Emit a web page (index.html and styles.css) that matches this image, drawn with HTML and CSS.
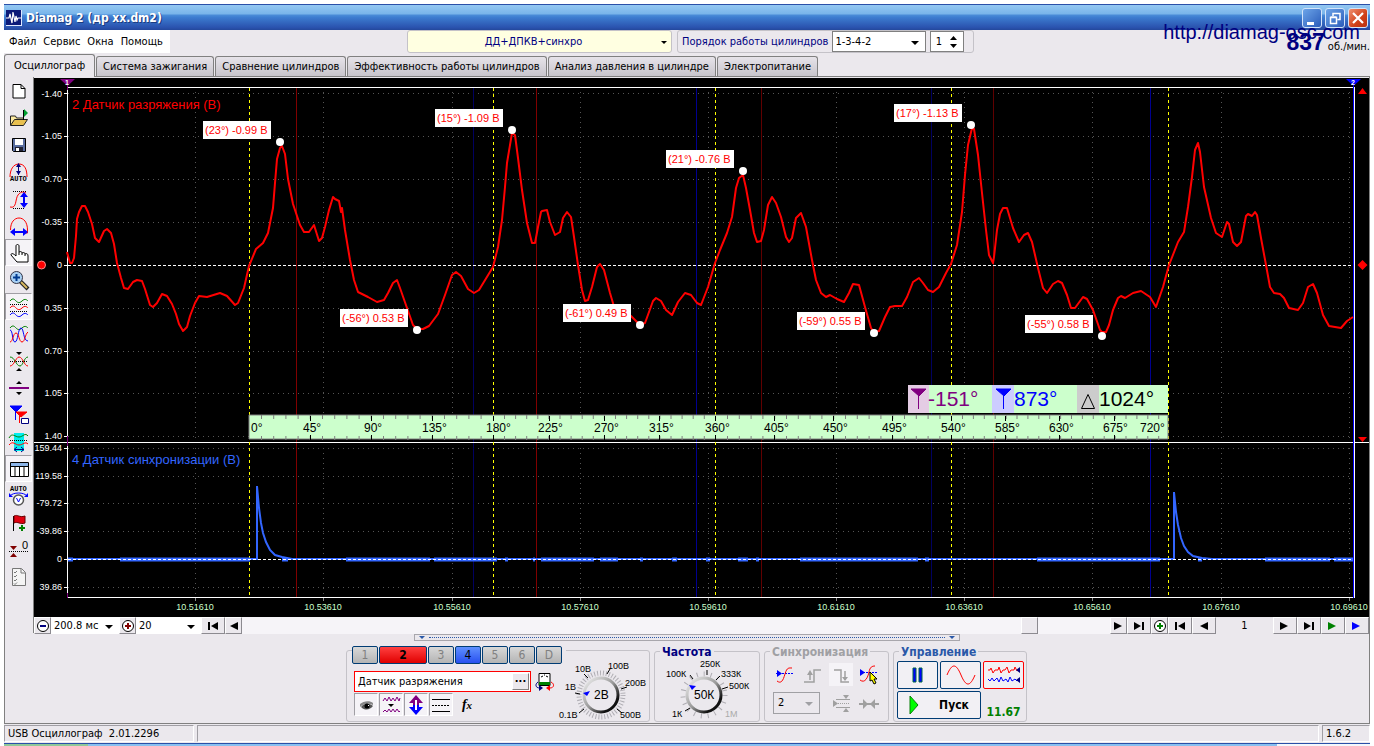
FILE: index.html
```html
<!DOCTYPE html>
<html lang="ru">
<head>
<meta charset="utf-8">
<title>Diamag 2 (др xx.dm2)</title>
<link rel="stylesheet" href="styles.css">
</head>
<body>
<svg class="defs" aria-hidden="true">
  <symbol id="i-next" viewBox="0 0 12 10"><path d="M1 1v8l8-4z"/></symbol>
  <symbol id="i-prev" viewBox="0 0 12 10"><path d="M10 1v8L2 5z"/></symbol>
  <symbol id="i-last" viewBox="0 0 12 10"><path d="M1 1v8l7-4zM9 1h2v8H9z"/></symbol>
  <symbol id="i-first" viewBox="0 0 12 10"><path d="M11 1v8L4 5zM1 1h2v8H1z"/></symbol>
</svg>
<div class="window">
  <header class="titlebar">
    <svg class="logo" width="16" height="16" viewBox="0 0 16 16"><rect width="16" height="16" fill="#0b1a78"/><path d="M0 15.500H16M15.500 0V16" stroke="#dfe8ff"/><path d="M0 8h3l1-4 2 9 1-11 2 10 1-6 1 4 1-2h3" fill="none" stroke="#fff" stroke-width="1.200"/></svg>
    <h1 class="title">Diamag 2 (др xx.dm2)</h1>
    <button class="win-btn" type="button" aria-label="Свернуть"><svg width="18" height="18"><path d="M4 13h7v3H4z" fill="#fff"/></svg></button>
    <button class="win-btn" type="button" aria-label="Восстановить"><svg width="18" height="18"><path d="M7 7V4.500h7v6h-2.500M4.500 8.500h6v6h-6zM4.500 8h6M7 4.500h7" fill="none" stroke="#fff" stroke-width="1.500"/></svg></button>
    <button class="win-btn win-close" type="button" aria-label="Закрыть"><svg width="18" height="18"><path d="M4 4l10 10M14 4L4 14" stroke="#fff" stroke-width="2.200"/></svg></button>
  </header>

  <div class="menu-row">
    <nav class="menu">
      <button type="button">Файл</button><button type="button">Сервис</button><button type="button">Окна</button><button type="button">Помощь</button>
    </nav>
    <span class="drop preset"><select aria-label="Режим"><option>ДД+ДПКВ+синхро</option></select></span>
    <div class="order">
      <label for="order">Порядок работы цилиндров</label>
      <span class="drop order-sel"><select id="order"><option>1-3-4-2</option></select></span>
      <span class="spin"><input type="text" value="1" aria-label="Цилиндр"><svg width="9" height="14" viewBox="0 0 9 14"><path d="M1 5h7L4.500 1zM1 9h7l-3.500 4z"/></svg></span>
    </div>
    <div class="rpm"><b>837</b><span>об./мин.</span></div>
    <a class="site" href="#">http://diamag-osc.com</a>
  </div>

  <div class="tabs" role="tablist">
    <button class="tab active" role="tab" type="button">Осциллограф</button>
    <button class="tab" role="tab" type="button">Система зажигания</button>
    <button class="tab" role="tab" type="button">Сравнение цилиндров</button>
    <button class="tab" role="tab" type="button">Эффективность работы цилиндров</button>
    <button class="tab" role="tab" type="button">Анализ давления в цилиндре</button>
    <button class="tab" role="tab" type="button">Электропитание</button>
  </div>

  <main class="main">
    <div class="upper">
      <div class="tools">
        <button type="button" aria-label="Новый"><svg viewBox="0 0 20 20"><path d="M4 3.500h8l4 4V17H4z" fill="#fff" stroke="#000"/><path d="M12 3.500v4h4" fill="none" stroke="#000"/></svg></button>
        <button type="button" aria-label="Открыть"><svg viewBox="0 0 20 20"><path d="M1.500 17V8h5l1 2h7v2" fill="#fbe9a0" stroke="#222"/><path d="M1.500 17.500l4-6h13l-4 6z" fill="#e8c050" stroke="#222"/><path d="M14.500 12V2" stroke="#000"/><path d="M15 1l4 4-4 4z" fill="#00a030"/></svg></button>
        <button type="button" aria-label="Сохранить"><svg viewBox="0 0 20 20"><path d="M3.500 3.500h13v13h-12l-1-1z" fill="#5a6ea0" stroke="#000"/><path d="M6 4h8v6H6z" fill="#fff"/><path d="M6 12h8v4H6z" fill="#223"/><path d="M7 13h3v3H7z" fill="#fff"/></svg></button>
        <button type="button" aria-label="Авто амплитуда"><svg viewBox="0 0 20 20"><path d="M1 15c0-7 3-13 9-13s8 6 8 13" fill="none" stroke="red"/><path d="M9.500 4v9" stroke="#000080"/><path d="M7 5l2.500-4L12 5zM7 9l2.500 4 2.500-4z" fill="#000080"/><text class="tiny" x="1" y="19">AUTO</text></svg></button>
        <button type="button" aria-label="Амплитуда"><svg viewBox="0 0 20 20"><path d="M4 2.500h14M4 19.500h12" stroke="#000" stroke-dasharray="1 1"/><path d="M1 18c7 2 5-8 8-12s6-3 8-2" fill="none" stroke="red"/><path d="M15 7v9" stroke="#00f" stroke-width="2"/><path d="M11 8l4-5 4 5zM11 14l4 5 4-5z" fill="#00f"/></svg></button>
        <button type="button" aria-label="Ширина"><svg viewBox="0 0 20 20"><path d="M1.500 14c0-8 4-12 8.500-12s8.500 4 8.500 12v3h-2" fill="none" stroke="red"/><path d="M4 16h12" stroke="#00f" stroke-width="2"/><path d="M6 12l-5 4 5 4zM14 12l5 4-5 4z" fill="#00f"/></svg></button>
        <button type="button" class="pressed" aria-label="Рука"><svg viewBox="0 0 20 20"><path d="M8 19l-6-7c0-2 2-2 5 1V3c0-2 3-2 3 0v6c2-1 3 0 3 1 2-1 3 0 3 1 2-1 3 0 3 2v6z" fill="#fff" stroke="#000"/><path d="M10 9v3M13 10v2M16 11v2" stroke="#000"/></svg></button>
        <button type="button" aria-label="Лупа"><svg viewBox="0 0 20 20"><path d="M11 11l8 8" stroke="#222" stroke-width="4"/><path d="M12 12l6 6" stroke="#d8b860" stroke-width="2"/><circle cx="7.500" cy="7.500" r="6" fill="#a8d0f4" stroke="#334"/><path d="M7.500 4v7M4 7.500h7" stroke="#003a90" stroke-width="2"/></svg></button>
        <button type="button" class="pressed" aria-label="Раздельно"><svg viewBox="0 0 20 20"><g fill="none"><path d="M1 4c3-4 5-1 6 0s3 3 6 0 5-1 6 0" stroke="green"/><path d="M1 11c3-4 5-1 6 0s3 3 6 0 5-1 6 0" stroke="red"/><path d="M1 18c3-4 5-1 6 0s3 3 6 0 5-1 6 0" stroke="#00f"/><path d="M1 7.500h18M1 14.500h18" stroke="#000" stroke-dasharray="1 1"/></g></svg></button>
        <button type="button" aria-label="Совместно"><svg viewBox="0 0 20 20"><g fill="none"><path d="M1 4c3-4 5-1 6 0s3 3 6 0 5-1 6 0" stroke="green"/><path d="M1 6c3 0 2 12 5 12S9 4 12 4s2 13 7 13" stroke="#00f"/><path d="M1 18C4 18 4 9 7 9s3 9 6 9 3-8 6-10" stroke="red"/></g></svg></button>
        <button type="button" aria-label="Центр"><svg viewBox="0 0 20 20"><path d="M1 10.500h18" stroke="#000" stroke-dasharray="1 1"/><path d="M1 6c5 0 6 9 10 9 3 0 4-9 8-9" fill="none" stroke="green"/><path d="M1 15c4 0 6-9 9-9 4 0 5 9 9 9" fill="none" stroke="red"/><path d="M7 1h6l-3 3zM7 20h6l-3-3z"/></svg></button>
        <button type="button" aria-label="Линия"><svg viewBox="0 0 20 20"><path d="M0 10h20" stroke="purple" stroke-width="2"/><path d="M7 6h6l-3-3zM7 14h6l-3 3z"/></svg></button>
        <button type="button" aria-label="Маркеры"><svg viewBox="0 0 20 20"><path d="M1 1h12L7 7zM6.500 6v9" fill="#00f" stroke="#00f"/><path d="M7 7h11l-6 5zM10.500 9v9" fill="red" stroke="red"/><path d="M12.500 13.500h7v5h-7z" fill="#fff" stroke="#000080"/></svg></button>
        <button type="button" aria-label="Интервал"><svg viewBox="0 0 20 20"><path d="M5 1h10v18H5z" fill="#0ee"/><path d="M0 6c3-6 6-1 10-1s6-5 9-1" fill="none" stroke="green"/><path d="M0 13c4-5 6 0 10 0s6-4 9-1" fill="none" stroke="red"/><path d="M1 8.500h18" stroke="#000" stroke-dasharray="1 1"/><path d="M6 17.500h9M8 15l-3 2.500L8 20M12 15l3 2.500-3 2.500" fill="none" stroke="#000080"/></svg></button>
        <button type="button" class="pressed" aria-label="Таблица"><svg viewBox="0 0 20 20"><path d="M1.500 3.500h18v14h-18z" fill="#fff" stroke="#000"/><path d="M2 4h17v3H2z" fill="#8ab4e8"/><path d="M2 7.500h17M6 7v10M10.500 7v10M15 7v10" stroke="#000"/></svg></button>
        <button type="button" aria-label="Авто развертка"><svg viewBox="0 0 20 20"><text class="tiny" x="1" y="5">AUTO</text><path d="M1 10c3-4 14-4 17 0" fill="none" stroke="#00f"/><path d="M0 7v4h4zM19 7v4h-4z" fill="#00f"/><circle cx="9.500" cy="14" r="5" fill="#fff" stroke="#555" stroke-width="1.500"/><path d="M7.500 12l2 4 2-4" fill="none" stroke="#00f"/></svg></button>
        <button type="button" aria-label="Флаг"><svg viewBox="0 0 20 20"><path d="M4.500 3v15" stroke="#000"/><path d="M5 3c4-2 5 2 11 0v7c-5 2-7-2-11 0z" fill="#e00010" stroke="#600"/><path d="M13 12v6M10 15h6" stroke="green" stroke-width="2"/></svg></button>
        <button type="button" aria-label="Ноль"><svg viewBox="0 0 20 20"><path d="M1 6h7l-3.500 4zM1 17h7l-3.500-4z" fill="#800000"/><path d="M0 11.500h20" stroke="#000" stroke-dasharray="1 1"/><text class="zero" x="13" y="9">0</text></svg></button>
        <button type="button" aria-label="Отчет"><svg viewBox="0 0 20 20"><path d="M3.500 1.500h9l4 4v13h-13z" fill="#f4f4f4" stroke="#777"/><path d="M5 5l1 1 2-2M5 9l1 1 2-2M5 13l1 1 2-2M5 16.500l1 1 2-2M12 2v4h4" fill="none" stroke="#777"/></svg></button>
      </div>

      <div class="scope-col">
        <svg class="scope" viewBox="34 78 1335 539" role="img" aria-label="Осциллограмма">
          <rect x="34" y="78" width="1335" height="539" fill="#000"/>
          <path class="grid" d="M68 93.500H1353M68 136.500H1353M68 179.500H1353M68 222.500H1353M68 308.500H1353M68 351.500H1353M68 393.500H1353M68 436.500H1353M68 448.500H1353M68 476.500H1353M68 503.500H1353M68 531.500H1353M68 587.500H1353"/>
          <path class="grid" d="M195.500 92V440M323.500 92V440M452.500 92V440M580.500 92V440M708.500 92V440M836.500 92V440M964.500 92V440M1092.500 92V440M1221.500 92V440M1349.500 92V440M195.500 448V596M323.500 448V596M452.500 448V596M580.500 448V596M708.500 448V596M836.500 448V596M964.500 448V596M1092.500 448V596M1221.500 448V596M1349.500 448V596"/>
          <path d="M296.500 88V597M536.500 88V597" stroke="#800000" stroke-width="1"/>
          <path d="M761.500 88V597M993.500 88V597" stroke="#600000"/>
          <path d="M696.500 88V597M1150.500 88V597" stroke="#000090"/>
          <path d="M473.500 88V597M931.500 88V597" stroke="#000060"/>
          <g class="axis"><path d="M67.500 87V598M34 442.500H1369M67 87.500H1354M67 597.500H1354"/><path d="M64 93.500h4M64 136.500h4M64 179.500h4M64 222.500h4M64 265.500h4M64 308.500h4M64 351.500h4M64 393.500h4M64 436.500h4M64 448.500h4M64 476.500h4M64 503.500h4M64 531.500h4M64 559.500h4M64 587.500h4"/><path d="M1354.500 87V598"/></g>
          <path d="M1353.500 84V598" stroke="#00f"/>
          <path d="M67.500 84v6M67.500 436v10M67.500 593v5" stroke="purple"/>
          <path d="M195.500 598v3M323.500 598v3M452.500 598v3M580.500 598v3M708.500 598v3M836.500 598v3M964.500 598v3M1092.500 598v3M1221.500 598v3M1349.500 598v3" stroke="#888"/>
          <path d="M249.500 88V597M493.500 88V597M715.500 88V597M951.500 88V597M1168.500 88V597" stroke="#ff0" stroke-dasharray="3 3"/>
          <path class="sync" d="M68 559H257V486L259 508L261 523L263 533L266 542L270 550L275 555L282 557L292 559H1174V492L1176 512L1178 525L1181 538L1184 546L1188 552L1193 556L1202 558L1212 559H1353"/>
          <path class="noise" d="M68 559.500h5M120 559.500H250M282 559.500h6M346 559.500H430M434 559.500H497M505 559.500h3M533 559.500h2M541 559.500H594M600 559.500H618M640 559.500h3M672 559.500h5M706 559.500h4M738 559.500h10M756 559.500h3M800 559.500H918M925 559.500h4M1037 559.500H1160M1198 559.500h4M1265 559.500H1330M1334 559.500H1353"/>
          <path d="M68 265.500H1353M68 559.500H1353" stroke="#fff" stroke-dasharray="3 2"/>
          <polyline class="vac" points="67,252 70,263 72,263 74,258 76,236 77,219 79,212 82,206 85,206 88,212 92,224 95,238 99,242 104,231 107,229 111,233 114,244 117,263 121,278 124,288 128,289 133,282 137,280 142,281 145,289 150,305 153,307 157,303 162,294 167,296 172,304 176,314 179,324 183,331 187,327 190,316 195,303 199,296 207,297 220,293 227,296 235,305 238,303 244,288 249,266 256,249 263,243 268,233 273,208 275,183 277,159 280,148 282,146 285,154 288,179 293,204 297,216 300,225 304,232 309,232 314,225 319,241 322,238 325,227 329,210 333,197 335,199 339,201 341,212 342,208 345,230 350,260 354,280 358,292 368,297 377,302 384,300 388,293 393,283 397,280 400,288 407,308 413,325 417,329 423,329 429,326 438,314 445,295 452,275 456,272 461,276 468,289 474,293 479,290 493,267 498,247 502,220 505,187 507,163 512,133 515,135 518,158 522,190 527,223 532,243 535,243 538,227 541,212 542,211 547,210 550,222 555,235 560,232 563,218 567,212 571,217 574,237 578,265 582,290 585,301 588,300 592,287 597,267 600,264 604,270 610,293 615,310 631,316 635,320 640,325 645,323 653,301 656,298 661,301 666,310 672,315 678,302 685,293 691,295 697,303 701,305 708,287 715,263 720,250 727,233 732,217 736,188 739,178 743,175 746,188 750,210 754,233 757,242 761,241 764,230 768,205 772,197 776,203 781,217 786,237 789,242 792,238 796,218 801,213 806,227 812,260 816,280 821,293 826,297 830,295 837,299 844,302 849,293 853,284 859,285 865,307 871,328 874,332 879,331 885,317 890,307 895,306 902,306 907,297 913,282 919,278 923,283 928,290 933,292 939,287 946,273 951,264 957,245 962,212 965,175 968,145 972,128 974,129 978,155 982,193 986,230 989,255 993,263 994,257 997,230 1000,214 1003,208 1007,208 1013,228 1019,242 1024,235 1028,233 1032,242 1038,268 1043,288 1047,293 1053,284 1058,281 1062,283 1067,295 1071,308 1075,308 1083,297 1087,299 1093,310 1100,330 1102,332 1106,332 1109,325 1113,310 1118,298 1121,296 1125,298 1133,293 1141,291 1150,297 1156,307 1163,287 1169,265 1178,242 1184,232 1188,207 1192,177 1195,150 1198,143 1200,152 1204,187 1211,218 1216,233 1222,237 1227,222 1229,224 1233,242 1237,246 1241,242 1246,216 1248,214 1252,216 1255,212 1257,215 1261,238 1266,265 1270,287 1274,293 1280,294 1284,298 1289,308 1298,310 1303,303 1308,287 1313,284 1317,293 1323,315 1329,326 1341,328 1347,321 1353,317"/>

          <g class="yl">
            <text x="62" y="97">-1.40</text><text x="62" y="139">-1.05</text><text x="62" y="182">-0.70</text><text x="62" y="225">-0.35</text><text x="62" y="268">0</text><text x="62" y="311">0.35</text><text x="62" y="354">0.70</text><text x="62" y="396">1.05</text><text x="62" y="439">1.40</text>
            <text x="62" y="451">159.44</text><text x="62" y="479">119.58</text><text x="62" y="506">-79.72</text><text x="62" y="534">-39.86</text><text x="62" y="562">0</text><text x="62" y="590">39.86</text>
          </g>
          <g class="xl">
            <text x="195" y="610">10.51610</text><text x="323" y="610">10.53610</text><text x="452" y="610">10.55610</text><text x="580" y="610">10.57610</text><text x="708" y="610">10.59610</text><text x="836" y="610">10.61610</text><text x="964" y="610">10.63610</text><text x="1092" y="610">10.65610</text><text x="1221" y="610">10.67610</text><text x="1349" y="610">10.69610</text>
          </g>
          <text class="name" x="72" y="109" fill="red">2 Датчик разряжения (В)</text>
          <text class="name" x="72" y="464" fill="#36f">4 Датчик синхронизации (В)</text>

          <path d="M60 79h15l-7.500 7z" fill="purple"/><text class="flag" x="65" y="85">1</text>
          <path d="M1346 79h15l-7.500 7z" fill="#00f"/><text class="flag" x="1351" y="85">2</text>
          <circle cx="41.500" cy="265" r="4" fill="red" stroke="#f88"/>
          <path d="M1358 94h9l-4.500-6zM1358 437h9l-4.500 5zM1357.500 265l5-5 5 5-5 5z" fill="red"/>

          <g fill="#fff"><path d="M203 121h68v18h-68zM435 109h68v18h-68zM666 150h68v18h-68zM894 104h68v18h-68zM340 309h68v18h-68zM563 304h68v18h-68zM797 312h68v18h-68zM1025 315h68v18h-68z"/>
          <circle cx="280" cy="142" r="4"/><circle cx="512" cy="130" r="4"/><circle cx="743" cy="171" r="4"/><circle cx="971" cy="125" r="4"/><circle cx="417" cy="330" r="4"/><circle cx="640" cy="325" r="4"/><circle cx="874" cy="333" r="4"/><circle cx="1102" cy="336" r="4"/></g>
          <g class="peak">
            <text x="205" y="134">(23°) -0.99 В</text><text x="437" y="122">(15°) -1.09 В</text><text x="668" y="163">(21°) -0.76 В</text><text x="896" y="117">(17°) -1.13 В</text><text x="342" y="322">(-56°) 0.53 В</text><text x="565" y="317">(-61°) 0.49 В</text><text x="799" y="325">(-59°) 0.55 В</text><text x="1027" y="328">(-55°) 0.58 В</text>
          </g>

          <path d="M908 385h260v28H908z" fill="#cfc"/>
          <path d="M908 385h21v28h-21z" fill="#e4cce4"/><path d="M992 385h22v28h-22z" fill="#ccf"/><path d="M1077 385h22v28h-22z" fill="#ccc"/>
          <path d="M911 389h15l-7 7zM918.500 394v15" fill="purple" stroke="purple"/>
          <path d="M996 389h15l-7 7zM1003.500 394v15" fill="#00f" stroke="#00f"/>
          <path d="M1081.500 408.500h13l-6.500-14z" fill="none" stroke="#000"/>
          <g class="big"><text x="928" y="406" fill="purple">-151°</text><text x="1014" y="406" fill="#00f">873°</text><text x="1099" y="406">1024°</text></g>

          <path d="M249 415h919v24H249z" fill="#cfc" stroke="gray"/>
          <g stroke="gray" stroke-width="4">
            <path d="M261 417H488M261 438H488" stroke-dasharray="1 11.200"/><path d="M504 417H711M504 438H711" stroke-dasharray="1 10.100"/><path d="M727 417H947M727 438H947" stroke-dasharray="1 10.800"/><path d="M962 417H1164M962 438H1164" stroke-dasharray="1 9.900"/>
          </g>
          <path d="M310.500 416v5M371.500 416v5M432.500 416v5M493.500 416v5M549.500 416v5M604.500 416v5M659.500 416v5M715.500 416v5M774.500 416v5M833.500 416v5M892.500 416v5M951.500 416v5M1005.500 416v5M1059.500 416v5M1114.500 416v5M310.500 435v5M371.500 435v5M432.500 435v5M493.500 435v5M549.500 435v5M604.500 435v5M659.500 435v5M715.500 435v5M774.500 435v5M833.500 435v5M892.500 435v5M951.500 435v5M1005.500 435v5M1059.500 435v5M1114.500 435v5" stroke="#000"/>
          <g class="deg">
            <text x="251" y="432">0°</text><text x="303" y="432">45°</text><text x="364" y="432">90°</text><text x="422" y="432">135°</text><text x="486" y="432">180°</text><text x="538" y="432">225°</text><text x="594" y="432">270°</text><text x="649" y="432">315°</text><text x="705" y="432">360°</text><text x="764" y="432">405°</text><text x="823" y="432">450°</text><text x="882" y="432">495°</text><text x="941" y="432">540°</text><text x="995" y="432">585°</text><text x="1049" y="432">630°</text><text x="1103" y="432">675°</text><text x="1140" y="432">720°</text>
          </g>
        </svg>

        <div class="transport">
          <button class="sq" type="button" aria-label="Уменьшить"><svg width="14" height="14"><circle cx="7" cy="7" r="5.500" fill="#fff" stroke="#000"/><path d="M4 7h6" stroke="#000080" stroke-width="2"/></svg></button>
          <span class="drop t-time"><select aria-label="Развертка"><option>200.8 мс</option></select></span>
          <button class="sq" type="button" aria-label="Увеличить"><svg width="14" height="14"><circle cx="7" cy="7" r="5.500" fill="#fff" stroke="#000"/><path d="M4 7h6M7 4v6" stroke="#800000" stroke-width="2"/></svg></button>
          <span class="drop t-zoom"><select aria-label="Масштаб"><option>20</option></select></span>
          <button class="wide" type="button" aria-label="В начало"><svg class="nav"><use href="#i-first"/></svg></button>
          <button class="sq" type="button" aria-label="Назад"><svg class="nav"><use href="#i-prev"/></svg></button>
          <div class="track"><span class="thumb"></span></div>
          <button class="sq" type="button" aria-label="Вперед"><svg class="nav"><use href="#i-next"/></svg></button>
          <button class="wide" type="button" aria-label="В конец"><svg class="nav"><use href="#i-last"/></svg></button>
          <button class="sq" type="button" aria-label="Добавить"><svg width="14" height="14"><circle cx="7" cy="7" r="5.500" fill="#fff" stroke="#000"/><path d="M4 7h6M7 4v6" stroke="green" stroke-width="2"/></svg></button>
          <button class="wide" type="button" aria-label="Первый кадр"><svg class="nav"><use href="#i-first"/></svg></button>
          <button class="wide" type="button" aria-label="Предыдущий кадр"><svg class="nav"><use href="#i-prev"/></svg></button>
          <span class="frame">1</span>
          <button class="wide" type="button" aria-label="Следующий кадр"><svg class="nav"><use href="#i-next"/></svg></button>
          <button class="wide" type="button" aria-label="Последний кадр"><svg class="nav"><use href="#i-last"/></svg></button>
          <button class="wide green" type="button" aria-label="Воспроизвести"><svg class="nav"><use href="#i-next"/></svg></button>
          <button class="wide blue" type="button" aria-label="Просмотр"><svg class="nav"><use href="#i-next"/></svg></button>
        </div>
      </div>
    </div>

    <div class="lower">
      <div class="splitter"><i></i><span></span><i></i></div>
      <div class="panels">
        <section class="panel channels">
          <div class="ch-left">
            <div class="ch-tabs">
              <button type="button">1</button><button class="red" type="button">2</button><button type="button">3</button><button class="blue" type="button">4</button><button type="button">5</button><button type="button">6</button><button type="button">D</button>
            </div>
            <div class="sensor">
              <div class="sensor-box"><input type="text" value="Датчик разряжения" aria-label="Датчик"><button type="button">...</button></div>
              <button class="flat" type="button" aria-label="Прибор"><svg width="20" height="20" viewBox="0 0 20 20"><path d="M4 1.500h11v12H4z" fill="#fff" stroke="#000"/><path d="M4 10h11v3H4z" fill="#008000"/><path d="M6 5l2-1M9 3h1M11 4l2 1" stroke="#000"/><path d="M3 10c-3 2-3 6 2 6" fill="none" stroke="#000080"/><path d="M4 13l4 3-4 3z" fill="#000080"/><path d="M16 10c4 2 3 6-1 6" fill="none" stroke="red"/><path d="M15 13l-4 3 4 3z" fill="red"/></svg></button>
            </div>
            <div class="opts">
              <button class="pressed" type="button" aria-label="Показать"><svg viewBox="0 0 20 20"><path d="M4 9c3-3 10-4 13-1v2C13 8 8 8 4 12z" fill="#888"/><path d="M5 12c3-4 8-4 12-1-3 4-8 5-12 1z" fill="#555"/><circle cx="11" cy="11" r="2.500"/><path d="M12 10h1v1h-1z" fill="#fff"/></svg></button>
              <button class="pressed" type="button" aria-label="Фильтр"><svg viewBox="0 0 20 20"><path d="M2 6l2-3 2 3 2-4 2 4 2-3 2 3 2-4 2 4 1-3M2 17l2-2 2 2 2-3 2 3 2-3 2 3 2-3 2 3 1-1" fill="none" stroke="purple"/><path d="M7 9h6l-3 3z"/></svg></button>
              <button class="pressed" type="button" aria-label="Инверсия"><svg viewBox="0 0 20 20"><path d="M10 0l7 8h-4v3H7V8H3z" fill="purple"/><path d="M10 20l-7-8h4v-2h6v2h4z" fill="#00f"/><path d="M9 5h2v10H9z" fill="#fff"/></svg></button>
              <button class="pressed" type="button" aria-label="Линии"><svg viewBox="0 0 20 20"><path d="M1 4.500h18M1 16.500h18" stroke="#000"/><path d="M1 10.500h18" stroke="#000" stroke-dasharray="2 1"/></svg></button>
              <button class="fx" type="button">f<sub>x</sub></button>
            </div>
          </div>
          <svg class="knob" width="94" height="68" viewBox="556 653 94 68">
            <circle class="ring" cx="601" cy="694" r="22"/>
            <path d="M580 693l-5-1M588 677l-4-4M607 673l3-5M621 688l6-2M584 708l-5 4M617 708l5 4" stroke="#000"/>
            <circle cx="601" cy="694" r="17" fill="#ebe8ed" stroke="url(#kg)" stroke-width="3"/>
            <path d="M583 692l7-2-3 5z" fill="#00f"/>
            <g class="kl"><text x="594" y="698" class="kv">2В</text><text x="575" y="671">10В</text><text x="608" y="668">100В</text><text x="565" y="689">1В</text><text x="625" y="685">200В</text><text x="559" y="717">0.1В</text><text x="620" y="717">500В</text></g>
            <defs><linearGradient id="kg" x1="0" y1="0" x2="1" y2="1"><stop offset="0" stop-color="#f4f4f4"/><stop offset=".5" stop-color="#999"/><stop offset=".8" stop-color="#111"/></linearGradient></defs>
          </svg>
        </section>

        <fieldset class="panel freq">
          <legend>Частота</legend>
          <svg class="knob" width="96" height="66" viewBox="659 655 96 66">
            <circle class="ring sparse" cx="704" cy="694" r="21"/>
            <path d="M693 678l-3-4M707 674v-5M716 679l4-4M722 688l6-2M690 707l-5 3" stroke="#000"/>
            <circle cx="704" cy="694" r="17" fill="#ebe8ed" stroke="url(#kg)" stroke-width="3"/>
            <path d="M689 684l7 1-4 4z" fill="#00f"/>
            <g class="kl"><text x="694" y="698" class="kv">50К</text><text x="700" y="666">250К</text><text x="666" y="676">100К</text><text x="721" y="676">333К</text><text x="729" y="688">500К</text><text x="672" y="716">1К</text><text x="725" y="716" fill="#aaa">1М</text></g>
          </svg>
        </fieldset>

        <fieldset class="panel sync-panel">
          <legend>Синхронизация</legend>
          <div class="sync-grid">
            <button type="button" aria-label="Уровень"><svg viewBox="0 0 20 20"><path d="M1 8.500h17" stroke="#00f" stroke-dasharray="2 1"/><path d="M2 16c4 3 6 0 8-7s4-6 7-6" fill="none" stroke="red"/><path d="M2 5v7l5-3.500z" fill="#00f"/></svg></button>
            <button type="button" aria-label="По фронту"><svg viewBox="0 0 20 20"><path d="M1 17h10V5h7M7 8v7" fill="none" stroke="#a0a0a0" stroke-width="1.500"/><path d="M4 10l3-5 3 5z" fill="#a0a0a0"/></svg></button>
            <button class="pressed" type="button" aria-label="По спаду"><svg viewBox="0 0 20 20"><path d="M3 5h7v12h8" fill="none" stroke="#a0a0a0" stroke-width="1.500"/><path d="M14 6v9" stroke="#a0a0a0" stroke-width="1.500"/><path d="M11 12l3 4 3-4z" fill="#a0a0a0"/></svg></button>
            <button type="button" aria-label="Захват"><svg viewBox="0 0 20 20"><path d="M1 7.500h18" stroke="#00f" stroke-dasharray="2 1"/><path d="M1 15c5 4 8-3 9-8s3-6 6-6" fill="none" stroke="red"/><path d="M1 4v7l5-3.500z" fill="#00f"/><path d="M11 7v9l2-1 2 4 2-1-2-4h3z" fill="#ff0" stroke="#000"/></svg></button>
            <span class="drop sync-sel"><select aria-label="Канал"><option>2</option></select></span>
            <button type="button" aria-label="Порог"><svg viewBox="0 0 20 20"><path d="M5 5.500h14M5 13.500h14" stroke="#a0a0a0"/><path d="M7 9.500h11" stroke="#a0a0a0" stroke-dasharray="1 1"/><path d="M2 6v7l5-3.500zM12 1h6l-3 4zM12 18h6l-3-4z" fill="#a0a0a0"/></svg></button>
            <button type="button" aria-label="Сжать"><svg viewBox="0 0 20 20"><path d="M0 10h20" stroke="#a0a0a0" stroke-width="2"/><path d="M4 5v10l5-5zM16 5v10l-5-5z" fill="#a0a0a0"/></svg></button>
          </div>
        </fieldset>

        <fieldset class="panel control">
          <legend>Управление</legend>
          <div class="ctl-grid">
            <button type="button" aria-label="Пауза"><svg width="14" height="16"><path d="M2 1h3v14H2zM8 1h3v14H8z" fill="#00f" stroke="#064"/></svg></button>
            <button type="button" aria-label="Синус"><svg width="30" height="20"><path d="M1 10c5-12 9-12 14 0s9 12 14 0" fill="none" stroke="red"/></svg></button>
            <button class="on" type="button" aria-label="Поток"><svg width="34" height="20" viewBox="0 0 34 20"><path d="M1 5h2l1-2 2 5 2-3h3l1-3 2 6 2-3h2l2-3 2 6 2-3h3l1-3 2 4 2-2" fill="none" stroke="red"/><path d="M1 14l2 2 2-3 2 3 3-3 2 4 2-5 2 4 3-2 2 3 2-5 2 4 3-2 2 2 2-2" fill="none" stroke="#00f"/><path d="M33 2v6l-4-3zM33 12v6l-4-3z" fill="#000080"/></svg></button>
            <button class="start" type="button"><svg width="10" height="20"><path d="M1 1v18l8-9z" fill="#0f0" stroke="#088008"/></svg><span>Пуск</span></button>
            <output class="clock">11.67</output>
          </div>
        </fieldset>
      </div>
    </div>
  </main>

  <footer class="status"><span class="s-dev">USB Осциллограф &nbsp;2.01.2296</span><span class="s-mid"></span><span class="s-ver">1.6.2</span></footer>
  <div class="taskbar"><span class="t-start"></span><span class="t-mid"></span><span class="t-end"></span></div>
</div>
</body>
</html>
```
FILE: styles.css
```css
* { box-sizing: border-box; }
body { margin: 0; padding: 4px 4px 0; background: #fff; color: #000; font: 11px/14px "DejaVu Sans Condensed", "DejaVu Sans", sans-serif; }
button, input, select { font: inherit; color: inherit; margin: 0; padding: 0; border: 0; background: none; border-radius: 0; outline: 0; }
button { display: flex; align-items: center; justify-content: center; }
.defs { position: absolute; width: 0; height: 0; }
.window { background: #ebe8ed; }

.titlebar { height: 26px; display: flex; align-items: center; gap: 3px; padding: 0 2px; border-top: 1px solid #2a50a8; background: linear-gradient(#94c8f2 0, #78b4ea 36%, #4a8cd8 40%, #3c7cd0 50%, #2a52ae 90%, #24489c); }
.title { flex: 1; margin: 0; padding-left: 1px; font-size: 12px; line-height: 18px; font-weight: bold; color: #fff; text-shadow: 1px 1px #1c3c80; }
.win-btn { width: 20px; height: 20px; border: 1px solid #d4e4fa; border-radius: 3px; background: linear-gradient(135deg, #6ca4e8, #2a5cba); }
.win-close { background: linear-gradient(135deg, #f09070, #d04018 60%, #b83010); }

.menu-row { display: flex; align-items: flex-start; height: 24px; position: relative; }
.menu { display: flex; gap: 7px; width: 166px; height: 23px; padding-left: 5px; background: #fff; }
.menu button { height: 24px; }
.drop { position: relative; display: flex; }
.drop select { appearance: none; width: 100%; height: 100%; padding: 0 4px; }
.drop::after { content: ""; position: absolute; right: 6px; top: 50%; margin-top: -1px; border: 4px solid transparent; border-top-color: #000; border-bottom: 0; pointer-events: none; }
.preset { margin-left: 237px; width: 265px; height: 23px; background: #ffffe1; border: 1px solid #c4c2c8; border-radius: 3px; color: #000080; }
.preset select { text-align: center; text-align-last: center; padding: 0 12px 0 0; }
.preset::after { border-width: 3px 3px 0; right: 4px; }
.order { display: flex; align-items: center; gap: 4px; margin-left: 5px; height: 23px; width: 297px; padding-left: 4px; border: 1px solid #c4c2c8; border-radius: 3px; color: #000080; }
.order label { flex: 1; white-space: nowrap; }
.order-sel { width: 97px; height: 21px; border: 1px solid #808080; background: #fff; color: #000; }
.order-sel select { padding: 0 2px; }
.spin { display: flex; align-items: center; width: 35px; height: 21px; margin-right: 9px; padding: 0 5px; border: 1px solid #808080; background: #fff; color: #000; }
.spin input { width: 100%; min-width: 0; }
.spin svg { flex: none; }
.rpm { flex: 1; display: flex; justify-content: flex-end; align-items: baseline; gap: 3px; white-space: nowrap; }
.rpm b { font: bold 23px/24px "Liberation Sans", sans-serif; color: #000080; }
.site { position: absolute; right: 10px; top: -8px; font: 20px/20px "Liberation Sans", sans-serif; color: #000080; text-decoration: none; }

.tabs { display: flex; align-items: flex-end; gap: 1px; height: 23px; border-bottom: 1px solid #808080; }
.tab { height: 20px; padding: 0 6px; border: 1px solid #808080; border-bottom: 0; border-radius: 3px 3px 0 0; background: linear-gradient(#e6e3e9, #c8c5cc); white-space: nowrap; }
.tab.active { height: 23px; padding: 0 9px; margin-bottom: -1px; background: #ebe8ed; }

.main { border-left: 1px solid #808080; border-right: 1px solid #808080; border-bottom: 1px solid #808080; }
.upper { display: flex; align-items: flex-start; }
.tools { flex: none; width: 29px; height: 556px; padding-right: 1px; border-right: 1px solid #808080; }
.tools button { width: 27px; height: 27px; }
.tools svg, .opts svg { width: 20px; height: 20px; overflow: visible; }
.pressed { border: 1px solid; border-color: #a09ea4 #fff #fff #a09ea4; background: #f5f3f7; }
.tiny { font: bold 7px "Liberation Mono", monospace; }
.zero { font: 11px "Liberation Sans", sans-serif; }

.scope-col { flex: 1; min-width: 0; padding-top: 1px; }
.scope { display: block; width: 100%; height: auto; font-family: "Liberation Sans", sans-serif; }
.grid { stroke: #555; stroke-dasharray: 1 4; fill: none; }
.axis { stroke: #fff; fill: none; }
.vac { fill: none; stroke: #f00; stroke-width: 2; stroke-linejoin: round; }
.sync { fill: none; stroke: #36f; stroke-width: 2; }
.noise { fill: none; stroke: #36f; stroke-width: 4; }
.yl { fill: #fff; font-size: 9px; text-anchor: end; }
.xl { fill: #cfc; font-size: 9px; text-anchor: middle; }
.name { font-size: 13px; }
.flag { fill: #fff; font-size: 7px; font-weight: bold; }
.peak { fill: #f00; font-size: 11px; }
.big { font-size: 21px; }
.deg { font-size: 12px; }

.transport { display: flex; height: 17px; }
.transport button { flex: none; border: 1px solid; border-color: #fff #8c8a90 #8c8a90 #fff; background: #ebe8ed; }
.transport .drop { background: #fff; }
.transport .drop select { padding: 0 3px; }
.sq { width: 17px; }
.wide { width: 24px; }
.nav { width: 12px; height: 10px; }
.green { fill: #008000; }
.transport .blue { fill: #00f; }
.t-time { width: 68px; }
.t-zoom { width: 65px; }
.track { flex: 1; display: flex; padding-right: 72px; justify-content: flex-end; background: #f6f4f8; }
.thumb { width: 17px; border: 1px solid; border-color: #fff #8c8a90 #8c8a90 #fff; background: #ebe8ed; }
.frame { width: 57px; text-align: center; line-height: 17px; }

.lower { height: 89px; }
.splitter { display: flex; align-items: center; gap: 4px; width: 546px; height: 7px; margin-left: 409px; padding: 0 4px; border: 1px solid #a8a6ac; }
.splitter span { flex: 1; border-top: 1px dotted #2a58a8; }
.splitter i { border: 3px solid transparent; border-top-color: #2a58a8; border-bottom: 0; }
.panels { display: flex; align-items: flex-end; gap: 4px; margin: 5px 0 0 341px; }
.panel { height: 76px; margin: 0; padding: 0; border: 1px solid #c4c2c8; border-radius: 3px; min-width: 0; }
legend { height: 10px; margin-left: 5px; padding: 0 2px; font-size: 12px; line-height: 12px; font-weight: bold; color: #000080; }
.panel.channels { display: flex; width: 304px; height: 72px; }
.ch-left { width: 210px; padding-left: 5px; }
.ch-tabs { display: flex; gap: 1px; width: 214px; margin-top: -5px; background: #ebe8ed; }
.ch-tabs button { width: 26px; height: 18px; border: 1px solid #003c74; border-radius: 2px; background: linear-gradient(#d8d8d8, #b4b4b4); color: #808080; font-size: 12px; }
.ch-tabs .red { width: 48px; background: linear-gradient(#ff4040, #e00000); color: #000; font-weight: bold; }
.ch-tabs .blue { background: linear-gradient(#6090ff, #2850f0); color: #000; }
.sensor { display: flex; gap: 4px; margin: 7px 0 0 2px; }
.sensor-box { display: flex; width: 177px; height: 21px; padding: 1px 1px 1px 3px; border: 1px solid #f00; background: #fff; }
.sensor-box input { flex: 1; min-width: 0; }
.sensor-box button { width: 17px; border: 1px solid; border-color: #fff #808080 #808080 #fff; background: #ebe8ed; font-weight: bold; line-height: 8px; padding-bottom: 5px; }
.opts { display: flex; gap: 1px; margin: 1px 0 0 2px; }
.opts button { width: 24px; height: 23px; }
.opts .fx { font: italic bold 14px/16px "Liberation Serif", serif; width: 26px; }
.fx sub { font-size: 11px; line-height: 10px; vertical-align: -1px; }
.knob { display: block; flex: none; font-family: "Liberation Sans", sans-serif; }
.channels .knob { margin: 3px 0 0 -1px; }
.ring { fill: none; stroke: #b0aeb4; stroke-width: 5; stroke-dasharray: 1 2; }
.sparse { stroke-dasharray: 1 6; }
.kl { font-size: 9px; }
.kl .kv { font-size: 12px; }
.freq { width: 106px; }
.freq .knob { margin-left: 4px; }
.sync-panel { width: 125px; }
.sync-panel legend { color: #a0a0a4; }
.sync-grid { display: grid; grid-template-columns: 24px 24px 24px 24px; column-gap: 4px; row-gap: 6px; margin: 7px 0 0 8px; }
.sync-grid button { height: 23px; }
.sync-grid svg { width: 20px; height: 20px; }
.sync-grid .pressed { border: 0; }
.sync-sel { grid-column: span 2; width: 47px; height: 22px; border: 1px solid #a0a0a4; }
.sync-sel::after { border-top-color: #a0a0a4; }
.control { width: 134px; }
.control legend { color: #2a58a8; }
.ctl-grid { display: grid; grid-template-columns: 41px 41px 41px; column-gap: 2px; row-gap: 2px; margin: 5px 0 0 3px; }
.ctl-grid button { height: 28px; border: 1px solid #003c74; border-radius: 2px; background: #f2f0f4; }
.ctl-grid .on { border-color: #f00; }
.ctl-grid .start { grid-column: span 2; gap: 20px; font-size: 12px; font-weight: bold; }
.clock { align-self: end; text-align: center; font-size: 12px; font-weight: bold; color: #008000; }

.status { display: flex; gap: 3px; margin-top: 1px; height: 17px; line-height: 17px; }
.status span { border: 1px solid; border-color: #a09ea4 #fff #fff #a09ea4; padding-left: 3px; line-height: 16px; }
.s-dev { width: 190px; }
.s-mid { flex: 1; }
.s-ver { width: 48px; }
.taskbar { display: flex; height: 4px; margin-top: 1px; border-top: 1px solid #2a50a8; background: #f4f8fc; }
.t-start { width: 84px; background: #90c898; }
.t-mid { flex: 1; background: #88c0f0; }
.t-end { width: 93px; }
```
